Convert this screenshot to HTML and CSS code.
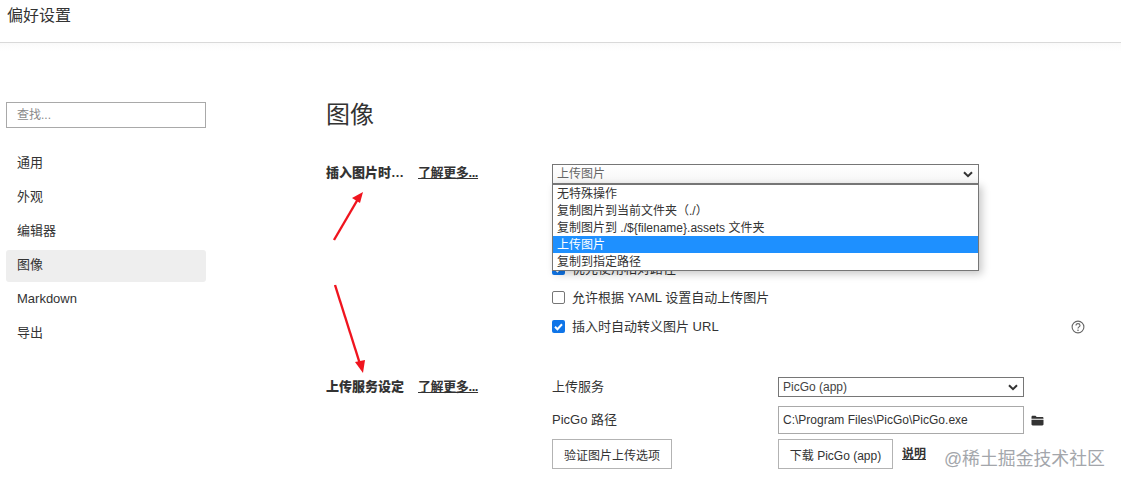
FILE: index.html
```html
<!DOCTYPE html>
<html lang="zh-CN">
<head>
<meta charset="utf-8">
<title>偏好设置</title>
<link rel="stylesheet" href="styles.css">
</head>
<body>
<header class="titlebar">偏好设置</header>
<div class="layout">
  <aside class="sidebar">
    <div class="search">查找...</div>
    <nav class="nav">
      <div class="nav-item">通用</div>
      <div class="nav-item">外观</div>
      <div class="nav-item">编辑器</div>
      <div class="nav-item active">图像</div>
      <div class="nav-item">Markdown</div>
      <div class="nav-item">导出</div>
    </nav>
  </aside>
  <main class="content">
    <h1 class="title">图像</h1>
    <section class="group insert-group">
      <div class="group-label"><b>插入图片时…</b><a class="more">了解更多...</a></div>
      <div class="group-body">
        <div class="select wide"><span>上传图片</span><svg class="chev" viewBox="0 0 10 7"><path d="M1 1.2l4 4 4-4" fill="none" stroke="#333" stroke-width="2"/></svg></div>
        <div class="popup">
          <div class="opt">无特殊操作</div>
          <div class="opt">复制图片到当前文件夹（./）</div>
          <div class="opt">复制图片到 ./${filename}.assets 文件夹</div>
          <div class="opt on">上传图片</div>
          <div class="opt">复制到指定路径</div>
        </div>
        <div class="checks">
          <label class="check"><span class="box on"><svg viewBox="0 0 13 13"><path d="M3 6.8l2.4 2.4L10 4.2" fill="none" stroke="#fff" stroke-width="2"/></svg></span>优先使用相对路径</label>
          <label class="check"><span class="box"></span>允许根据 YAML 设置自动上传图片</label>
          <label class="check"><span class="box on"><svg viewBox="0 0 13 13"><path d="M3 6.8l2.4 2.4L10 4.2" fill="none" stroke="#fff" stroke-width="2"/></svg></span>插入时自动转义图片 URL
            <svg class="help" viewBox="0 0 14 14"><circle cx="7" cy="7" r="5.9" fill="none" stroke="#666" stroke-width="1.1"/><path d="M5 5.6c0-1.3 1-2 2-2s2 .7 2 1.8c0 1.5-2 1.5-2 3" fill="none" stroke="#666" stroke-width="1.1"/><circle cx="7" cy="10.2" r=".8" fill="#666"/></svg>
          </label>
        </div>
      </div>
    </section>
    <section class="group upload-group">
      <div class="group-label"><b>上传服务设定</b><a class="more">了解更多...</a></div>
      <div class="form">
        <span class="field-label">上传服务</span>
        <div class="select service"><span>PicGo (app)</span><svg class="chev" viewBox="0 0 10 7"><path d="M1 1.2l4 4 4-4" fill="none" stroke="#333" stroke-width="2"/></svg></div>
        <span class="field-label path-label">PicGo 路径</span>
        <div class="path-row">
          <div class="path">C:\Program Files\PicGo\PicGo.exe</div>
          <svg class="folder" viewBox="0 0 13 11"><path d="M0.5 2c0-.8.5-1.3 1.200-1.300h2.800l1.200 1.300h5.600c.7 0 1.200.5 1.200 1.200v.6H.5zM.5 4.700h12v4.500c0 .7-.5 1.200-1.200 1.200H1.700c-.7 0-1.200-.5-1.200-1.200z" fill="#333"/></svg>
        </div>
        <button class="btn verify" type="button">验证图片上传选项</button>
        <div class="dl-row"><button class="btn download" type="button">下载 PicGo (app)</button><a class="doc">说明</a></div>
      </div>
    </section>
  </main>
</div>
<svg class="arrows" viewBox="0 0 1121 485">
  <path d="M334 240L358 199" stroke="#f0141e" stroke-width="2.400" fill="none"/>
  <path d="M363 192L352 198L360 203Z" fill="#f0141e"/>
  <path d="M335 285L360 364" stroke="#f0141e" stroke-width="2.400" fill="none"/>
  <path d="M363 373L355 362L365 360Z" fill="#f0141e"/>
</svg>
<div class="watermark">@稀土掘金技术社区</div>
</body>
</html>
```
FILE: styles.css
```css
* { box-sizing: border-box; }
html, body { margin: 0; height: 100%; overflow: hidden; }
body {
  position: relative;
  background: #fff;
  color: #333;
  font: 13px/17px "Liberation Sans", "Noto Sans CJK SC", sans-serif;
}
.titlebar {
  height: 43px;
  padding: 6px 0 0 7px;
  font-size: 16px;
  line-height: 19px;
  border-bottom: 1px solid #d9d9d9;
}
.layout { display: flex; height: 442px; background: linear-gradient(#fafafa, #fff 8px); }
.sidebar { width: 200px; margin-left: 6px; padding-top: 59px; flex: none; }
.search {
  height: 26px;
  padding: 4px 10px;
  border: 1px solid #a9a9a9;
  color: #8a8a8a;
  font-size: 12px;
}
.nav { margin-top: 18px; }
.nav-item { height: 34px; padding: 0 11px; line-height: 34px; border-radius: 3px; }
.nav-item.active { height: 32px; margin-top: 2px; line-height: 30px; background: #eee; }
.content { flex: none; width: 795px; margin-left: 120px; }
.title { margin: 0; padding-top: 55px; height: 121px; font-size: 24px; line-height: 34px; font-weight: 400; }
.group { display: grid; grid-template-columns: 226px 1fr; position: relative; }
.group-label { display: flex; gap: 14px; font-weight: 700; line-height: 17px; color: #333; }
.more, .doc { text-decoration: underline; font-weight: 700; }
.more { letter-spacing: -.4px; }
.insert-group { height: 212px; }
.upload-group .group-label { padding-top: 2px; }
.select {
  display: flex;
  align-items: center;
  justify-content: space-between;
  height: 20px;
  padding: 0 4px;
  border: 1px solid #767676;
  background: #fff;
  color: #444;
  font-size: 12px;
}
.select.wide { width: 427px; background: linear-gradient(#fff, #f6f6f6); color: #666; }
.chev { width: 10px; height: 7px; margin-right: 1px; }
.popup {
  position: absolute;
  left: 226px;
  top: 19px;
  z-index: 2;
  width: 427px;
  border: 1px solid #767676;
  border-top-width: 2px;
  background: #fff;
  box-shadow: 3px 3px 8px rgba(0, 0, 0, .22);
  font-size: 12px;
}
.opt { height: 17px; padding-left: 4px; line-height: 18px; }
.opt.on { background: #1e90ff; color: #fff; }
.checks { display: flex; flex-direction: column; gap: 12px; padding-top: 76px; }
.check { display: flex; align-items: center; gap: 7px; position: relative; }
.box { width: 13px; height: 13px; border: 1px solid #767676; border-radius: 2px; background: #fff; flex: none; }
.box.on { border: 0; background: #0f75e8; }
.box svg { display: block; width: 13px; height: 13px; }
.help { width: 14px; height: 14px; margin-left: auto; margin-right: 36px; }
.form { display: grid; grid-template-columns: 226px 1fr; align-items: center; row-gap: 9px; margin-top: 1px; }
.service { width: 246px; }
.field-label { line-height: 20px; }
.path-row { display: flex; align-items: center; gap: 7px; }
.path {
  width: 246px;
  height: 28px;
  padding: 0 4px;
  border: 1px solid #a9a9a9;
  font-size: 12px;
  line-height: 26px;
}
.folder { width: 13px; height: 11px; }
.btn {
  height: 30px;
  padding: 0;
  border: 1px solid #b3b3b3;
  background: #fff;
  color: #333;
  font: 12px "Liberation Sans", "Noto Sans CJK SC", sans-serif;
}
.verify { width: 120px; margin-top: -4px; }
.download { width: 115px; }
.dl-row { display: flex; align-items: center; gap: 9px; margin-top: -4px; font-size: 12px; }
.doc { font-size: 12px; }
.arrows { position: absolute; left: 0; top: 0; width: 1121px; height: 485px; z-index: 3; pointer-events: none; }
.watermark {
  position: absolute;
  left: 944px;
  top: 447px;
  z-index: 3;
  color: #a3a6ab;
  font-size: 17.85px;
  line-height: 24px;
  white-space: nowrap;
}
```
